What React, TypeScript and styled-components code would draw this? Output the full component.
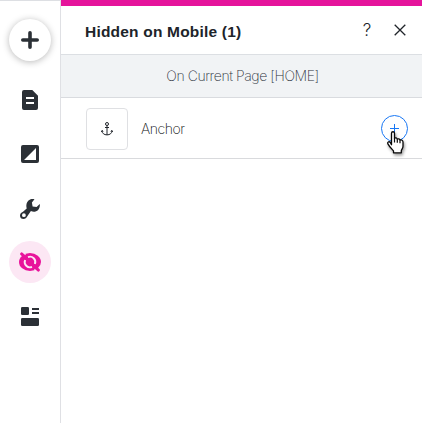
import React from 'react';
import styled, { createGlobalStyle } from 'styled-components';

const GlobalStyle = createGlobalStyle`
  *, *::before, *::after { box-sizing: border-box; }
  body { margin: 0; background: #fff; overflow: hidden; }
  button { padding: 0; border: 0; background: none; font: inherit; color: inherit; }
  svg { display: block; }
`;

const Editor = styled.div`
  display: flex;
  width: 100%;
  height: 100vh;
  font-family: Inter, 'Liberation Sans', sans-serif;
  color: #20242a;
`;

const Sidebar = styled.nav`
  flex: none;
  width: 61px;
  display: grid;
  grid-template-rows: 60px 60px 48px 61px 46px 63px;
  align-content: start;
  justify-items: center;
  align-items: center;
  padding: 9px 0 0;
  border-top: 1px solid #dddfe3;
  border-right: 1px solid #dfe0e4;
  color: #2b3036;
`;

const ToolButton = styled.button<{ $tone?: 'raised' | 'active' }>`
  display: grid;
  place-items: center;
  width: 42px;
  height: 42px;
  border-radius: 50%;
  color: ${p => (p.$tone === 'active' ? '#e8149b' : 'inherit')};
  background: ${p => (p.$tone === 'active' ? '#fce7f4' : '#fff')};
  box-shadow: ${p => (p.$tone === 'raised' ? '0 1px 7px rgba(0, 0, 0, 0.28)' : 'none')};
`;

const Panel = styled.section`
  flex: 1;
  min-width: 0;
  border-top: 6px solid #e5149b;
`;

const Header = styled.header`
  display: flex;
  align-items: center;
  height: 48px;
  padding: 3px 16px 0 24px;
`;

const Title = styled.h1`
  flex: 1;
  margin: 0;
  font-family: 'Liberation Sans', Arial, sans-serif;
  font-size: 15.5px;
  line-height: 20px;
  font-weight: 700;
  letter-spacing: 0.2px;
  white-space: nowrap;
`;

const HeaderActions = styled.div`
  display: flex;
  align-items: center;
  gap: 22px;
  margin-top: -3px;
`;

const HelpButton = styled.button`
  width: 10px;
  font-size: 17px;
  line-height: 20px;
  font-weight: 300;
`;

const SectionHeading = styled.h2`
  display: flex;
  align-items: center;
  justify-content: center;
  height: 44px;
  margin: 0;
  border-top: 1px solid #dcdfe3;
  border-bottom: 1px solid #d9dbdf;
  background: #f1f3f5;
  color: #2d323c;
  font-size: 14px;
  font-weight: 200;
  letter-spacing: -0.43px;
  padding: 0 0 2px 2px;
`;

const ElementRow = styled.div`
  display: flex;
  align-items: center;
  height: 61px;
  padding: 0 14px 0 25px;
  border-bottom: 1px solid #d9dadd;
`;

const Thumbnail = styled.div`
  display: grid;
  place-items: center;
  width: 42px;
  height: 42px;
  margin-top: 2px;
  border: 1px solid #dfe0e3;
  border-radius: 4px;
`;

const ElementName = styled.span`
  flex: 1;
  margin-left: 13px;
  color: #080a0e;
  font-size: 14px;
  font-weight: 200;
  letter-spacing: -0.45px;
`;

const ShowButton = styled.button`
  position: relative;
  display: grid;
  place-items: center;
  width: 27px;
  height: 27px;
  margin-top: 1px;
  border: 1px solid #1877f5;
  border-radius: 50%;
  color: #1877f5;
`;

const Pointer = styled.svg`
  position: absolute;
  left: 5px;
  top: 15px;
  overflow: visible;
  filter: drop-shadow(1px 2px 1.5px rgba(0, 0, 0, 0.4));
`;

const PlusIcon = () => (
  <svg width="18" height="18" viewBox="0 0 18 18" fill="none" stroke="currentColor" strokeWidth="3.6" strokeLinecap="round">
    <path d="M9 1.8v14.4M1.8 9h14.4" />
  </svg>
);

const PageIcon = () => (
  <svg width="16" height="20" viewBox="0 0 16 20">
    <path fill="currentColor" fillRule="evenodd" d="M2 0h8.3L16 5.7V18a2 2 0 0 1-2 2H2a2 2 0 0 1-2-2V2a2 2 0 0 1 2-2ZM4 7v2h8V7ZM4 12v2h8v-2Z" />
  </svg>
);

const BackgroundIcon = () => (
  <svg width="18" height="18" viewBox="0 0 18 18">
    <path fill="currentColor" fillRule="evenodd" d="M2 0h14a2 2 0 0 1 2 2v14a2 2 0 0 1-2 2H2a2 2 0 0 1-2-2V2a2 2 0 0 1 2-2ZM15 3 3 15h12Z" />
  </svg>
);

const WrenchIcon = () => (
  <svg width="20" height="20" viewBox="0 0 20 20">
    <path fill="currentColor" fillRule="evenodd" d="M14.5.3 11.9 3.4l.7 4 4 .7 3.200-3c.5 3.300-1.200 6.600-4.300 7.500-1.700.5-3.300.1-4.600-.6L7.500 17c-1 1.900-2.200 3-4 3C1.400 20 0 18.700 0 16.700c0-1.700 1.100-3.100 3-3.900l3.700-3.300C5.600 5.700 6.900 1.800 10.100.5c1.500-.6 3.100-.6 4.400-.2ZM3.900 14.300a1.900 1.900 0 1 0 0 3.800 1.900 1.900 0 0 0 0-3.800Z" />
  </svg>
);

const HiddenIcon = () => (
  <svg width="22" height="20" viewBox="0 0 22 20" fill="none">
    <ellipse cx="11" cy="10" rx="11" ry="9" fill="currentColor" />
    <path d="M9 5.100a5.300 5.300 0 0 1 6.900 6.900M13 14.900A5.300 5.300 0 0 1 6.100 8" stroke="#fce7f4" strokeWidth="1.900" />
    <path d="m3.800.7 2.700 2.100M18.200 19.300l-2.700-2.100" stroke="#fce7f4" strokeWidth="1.200" />
    <path d="m2.600 1.900 4 3.700M19.400 18.100l-4-3.700" stroke="currentColor" strokeWidth="2.900" strokeLinecap="round" />
  </svg>
);

const LayoutIcon = () => (
  <svg width="18" height="19" viewBox="0 0 18 19" fill="currentColor">
    <rect width="8" height="8" rx="1.3" />
    <rect x="11" y="1" width="7" height="2" />
    <rect x="11" y="5" width="7" height="2" />
    <rect y="11" width="18" height="8" rx="1.3" />
  </svg>
);

const CloseIcon = () => (
  <svg width="12" height="12" viewBox="0 0 12 12" stroke="currentColor" strokeWidth="1.3">
    <path d="m.7.7 10.600 10.600M11.300.7.7 11.300" />
  </svg>
);

const AnchorIcon = () => (
  <svg width="12" height="14" viewBox="0 0 12 14" fill="none" stroke="currentColor" strokeWidth="1">
    <circle cx="6" cy="2" r="1.5" />
    <path d="M6 3.500V13M4 5.500h4M1 8.700c0 2.500 2.100 4.200 5 4.200s5-1.700 5-4.200M.3 9.900 1 8.500l1.300.9M11.700 9.900 11 8.500l-1.300.9" />
  </svg>
);

const PointerIcon = () => (
  <Pointer width="17" height="23" viewBox="0 0 17 23">
    <path
      d="M4.500 13.700V2.300c0-2.100 3-2.100 3 0v5.100c.9-.9 2.600-.5 2.800.8.900-.7 2.500-.3 2.700 1 1.500-.7 3 .1 3 1.800v4.200c0 2.300-1.400 3-1.700 4.600v2H6.500v-1.900C4.700 17.900 2.600 16 .9 12.900c-1-1.800 1.100-2.900 2.400-1.500Z"
      fill="#fff"
      stroke="#080808"
      strokeWidth="1.3"
      strokeLinejoin="round"
    />
    <path d="M7.500 7.300v4.200M10.300 8.200v3.600M13 9.200v3" fill="none" stroke="#080808" strokeWidth="1.2" />
  </Pointer>
);

export default function App() {
  return (
    <>
      <GlobalStyle />
      <Editor>
        <Sidebar>
          <ToolButton $tone="raised" aria-label="Add"><PlusIcon /></ToolButton>
          <ToolButton aria-label="Pages"><PageIcon /></ToolButton>
          <ToolButton aria-label="Background"><BackgroundIcon /></ToolButton>
          <ToolButton aria-label="Tools"><WrenchIcon /></ToolButton>
          <ToolButton $tone="active" aria-label="Hidden elements"><HiddenIcon /></ToolButton>
          <ToolButton aria-label="Layouts"><LayoutIcon /></ToolButton>
        </Sidebar>
        <Panel>
          <Header>
            <Title>Hidden on Mobile (1)</Title>
            <HeaderActions>
              <HelpButton>?</HelpButton>
              <button aria-label="Close"><CloseIcon /></button>
            </HeaderActions>
          </Header>
          <SectionHeading>On Current Page [HOME]</SectionHeading>
          <ElementRow>
            <Thumbnail><AnchorIcon /></Thumbnail>
            <ElementName>Anchor</ElementName>
            <ShowButton aria-label="Show Anchor">
              <svg width="9" height="9" viewBox="0 0 9 9" stroke="currentColor" strokeWidth="1">
                <path d="M4.500 0v9M0 4.500h9" />
              </svg>
              <PointerIcon />
            </ShowButton>
          </ElementRow>
        </Panel>
      </Editor>
    </>
  );
}
